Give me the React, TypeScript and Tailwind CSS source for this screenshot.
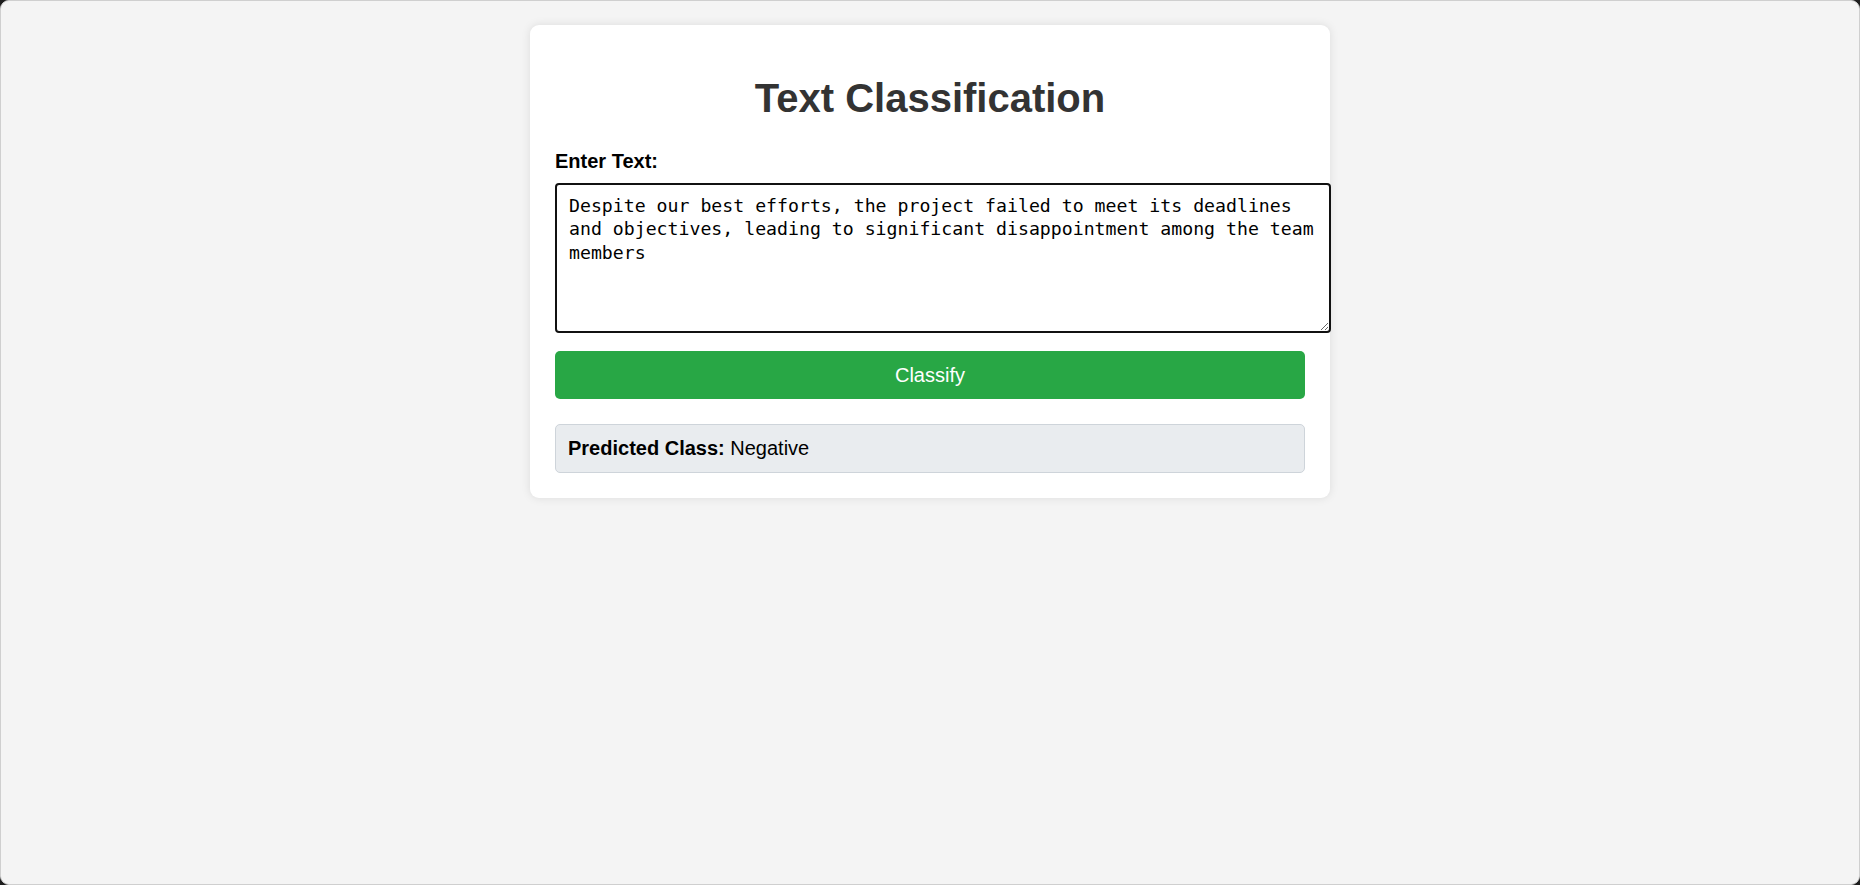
import React, { useEffect, useRef, useState } from 'react';

const SAMPLE =
  'Despite our best efforts, the project failed to meet its deadlines and objectives, leading to significant disappointment among the team members';

export default function App() {
  const [text, setText] = useState(SAMPLE);
  const [prediction, setPrediction] = useState('Negative');
  const areaRef = useRef<HTMLTextAreaElement>(null);

  useEffect(() => {
    const el = areaRef.current;
    if (el) {
      el.focus();
      el.setSelectionRange(el.value.length, el.value.length);
    }
  }, []);

  const classify = () => {
    // toy classifier, the real one lives on the server
    const neg = /fail|disappoint|bad|poor|worst/i.test(text);
    setPrediction(neg ? 'Negative' : 'Positive');
  };

  return (
    <div className="bg-[#1e1e1e]">
      <div
        className="h-[885px] overflow-hidden rounded-[9px] border border-[#cfcfcf] bg-[#f4f4f4] pt-[24px]"
        style={{ fontFamily: '"Liberation Sans", Arial, sans-serif' }}
      >
        {/* Card */}
        <div className="mx-auto w-[800px] rounded-[9px] bg-white p-[25px] shadow-[0_0_10px_rgba(0,0,0,0.1)]">
          <h1 className="mt-[25px] mb-[29px] text-center text-[40px] leading-[46px] font-bold text-[#333]">
            Text Classification
          </h1>

          <label htmlFor="text" className="block text-[20px] leading-[22px] font-bold text-black">
            Enter Text:
          </label>

          <textarea
            id="text"
            ref={areaRef}
            value={text}
            onChange={(e) => setText(e.target.value)}
            className="mt-[11px] block h-[150px] w-[776px] rounded-[4px] border-2 border-[#111] bg-white pt-[9px] pr-[1px] pb-[9px] pl-[12px] text-[18.2px] leading-[23.3px] text-black outline-none"
            style={{ fontFamily: '"DejaVu Sans Mono", "Liberation Mono", monospace' }}
          />

          <button
            onClick={classify}
            className="mt-[18px] block h-[48px] w-full cursor-pointer rounded-[5px] bg-[#28a745] text-[20px] text-white hover:bg-[#218838]"
          >
            Classify
          </button>

          <div className="mt-[25px] rounded-[5px] border border-[#ced4da] bg-[#e9ecef] px-[12px] py-[12px] text-[20px] leading-[23px] text-black">
            <strong>Predicted Class:</strong> {prediction}
          </div>
        </div>
      </div>
    </div>
  );
}
